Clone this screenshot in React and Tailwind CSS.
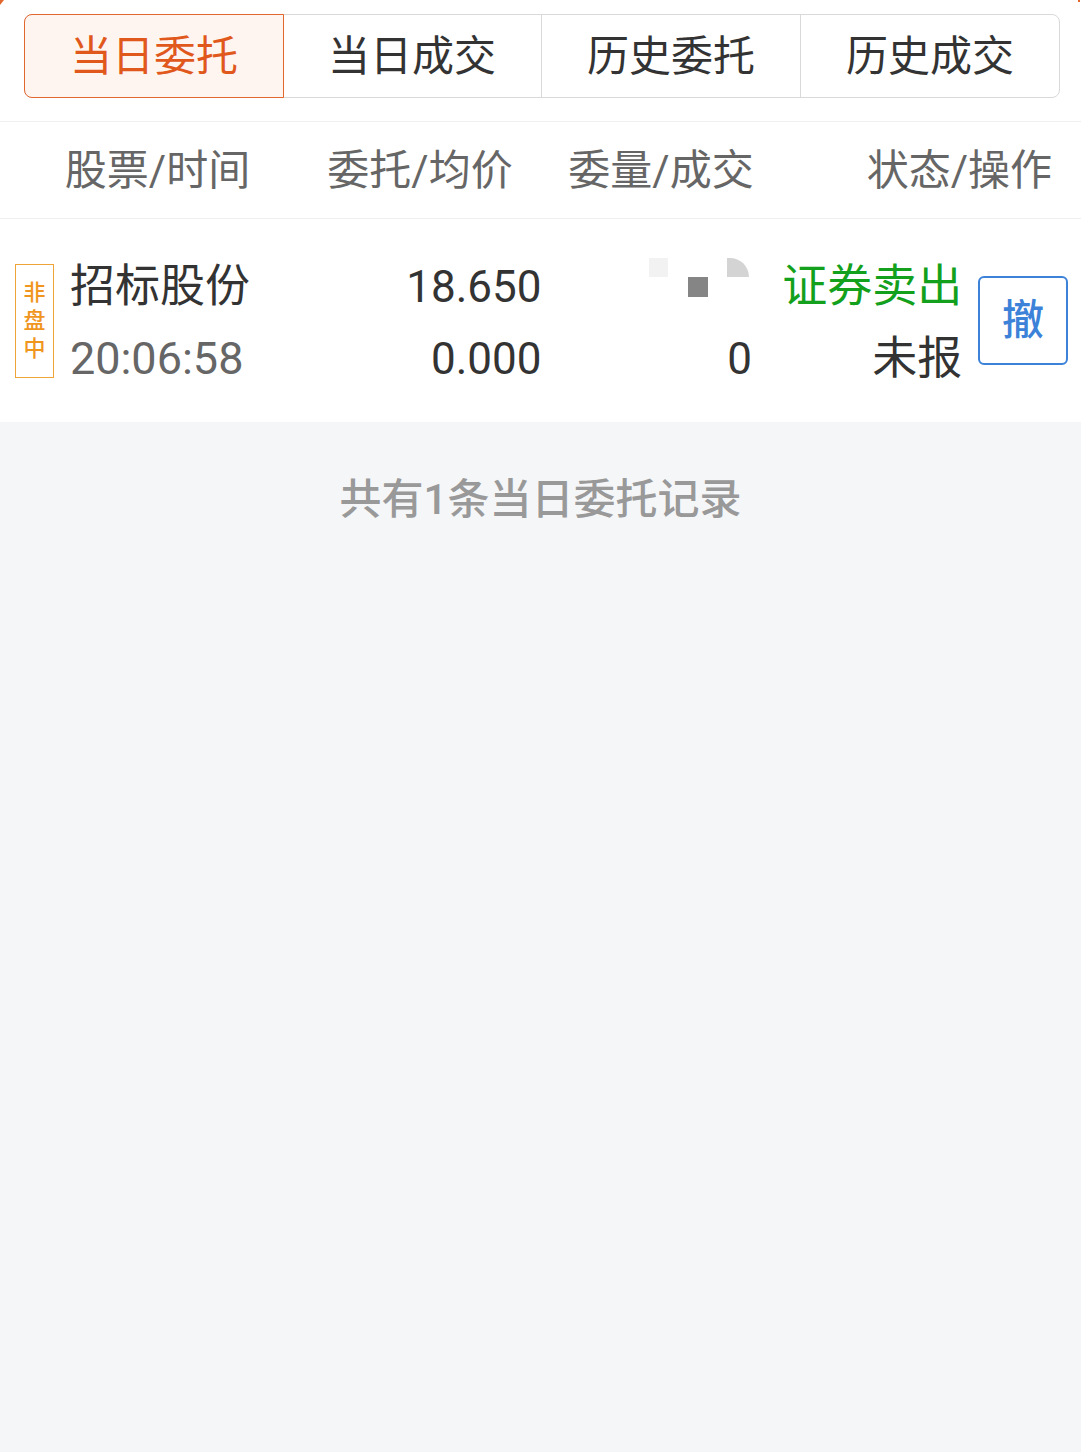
import React from "react";

const FONT = { fontFamily: 'Roboto, "Noto Sans CJK SC", "Noto Sans", sans-serif' };

function Tabs() {
  const tabs = ["当日委托", "当日成交", "历史委托", "历史成交"];
  return (
    <div className="flex h-[84px] rounded-[8px] border border-[#d9d9d9]">
      {tabs.map((t, i) => (
        <div
          key={t}
          className={
            i === 0
              ? "-m-px flex h-[84px] w-[260px] items-center justify-center rounded-l-[8px] border border-[#e2672e] bg-[#fff5f0] text-[42px] text-[#e0581b]"
              : i === 3
              ? "flex flex-1 items-center justify-center text-[42px] text-[#333]"
              : "flex w-[259px] items-center justify-center border-r border-[#d9d9d9] text-[42px] text-[#333]"
          }
        >
          {t}
        </div>
      ))}
    </div>
  );
}

export default function App() {
  return (
    <div className="relative min-h-[1452px] w-full bg-[#f5f6f8]" style={FONT}>
      <div className="absolute left-0 top-0 h-[5px] w-[4px] bg-[#e2672e] [clip-path:polygon(0_0,100%_0,0_100%)]" />
      <div className="absolute right-[1px] top-0 h-[2px] w-[2px] bg-[#e2672e]" />

      <div className="bg-white pb-[23px] pl-[24px] pr-[21px] pt-[14px]">
        <Tabs />
      </div>

      <div className="flex h-[98px] items-center border-y border-[#efefef] bg-white text-[42px] text-[#666]">
        <div className="w-[315px] text-center">股票/时间</div>
        <div className="w-[210px] text-center">委托/均价</div>
        <div className="w-[272px] text-center">委量/成交</div>
        <div className="flex-1 pr-[29px] text-right">状态/操作</div>
      </div>

      <div className="flex h-[203px] items-center bg-white pl-[15px] pr-[13px]">
        <div className="flex h-[114px] w-[39px] flex-col items-center justify-center border border-[#efa43a] text-[22px] font-medium leading-[28px] text-[#f0961e]">
          <span>非</span>
          <span>盘</span>
          <span>中</span>
        </div>
        <div className="ml-[16px] mt-[4px] flex w-[230px] flex-col text-[45px] leading-[72px]">
          <span className="text-[#333]">招标股份</span>
          <span className="text-[#666]">20:06:58</span>
        </div>
        <div className="mt-[4px] flex w-[243px] flex-col text-right text-[44px] leading-[72px] text-[#333]">
          <span>18.650</span>
          <span>0.000</span>
        </div>
        <div className="mt-[4px] flex w-[211px] flex-col text-right text-[44px] leading-[72px] text-[#333]">
          <div className="relative h-[72px]">
            <div className="absolute left-[107px] top-[7px] h-[19px] w-[19px] bg-[#f2f2f2]" />
            <div className="absolute left-[146px] top-[26px] h-[20px] w-[20px] bg-[#858585]" />
            <div className="absolute left-[185px] top-[7px] h-[19px] w-[22px] rounded-tr-[22px] bg-[#d4d4d4]" />
          </div>
          <span>0</span>
        </div>
        <div className="mt-[4px] flex w-[211px] flex-col text-right text-[45px] leading-[72px]">
          <span className="text-[#13a01c]">证券卖出</span>
          <span className="text-[#333]">未报</span>
        </div>
        <div className="ml-[16px] flex h-[89px] w-[90px] items-center justify-center rounded-[6px] border-2 border-[#3c82d8] text-[42px] font-medium text-[#3c82d8]">
          撤
        </div>
      </div>

      <div className="pt-[50px] text-center text-[42px] font-medium leading-[56px] text-[#999]">
        共有1条当日委托记录
      </div>
    </div>
  );
}
